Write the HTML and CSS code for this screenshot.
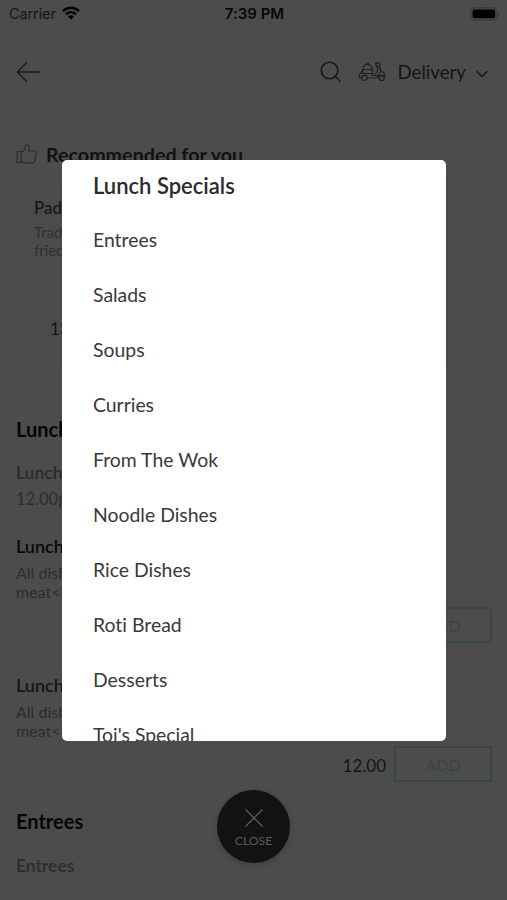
FILE: index.html
```html
<!DOCTYPE html>
<html lang="en">
<head>
<meta charset="utf-8">
<title>Menu</title>
<link rel="stylesheet" href="styles.css">
</head>
<body>
<div class="screen">
  <header class="status">
    <div class="carrier">Carrier
      <svg width="18" height="14" viewBox="0 0 18 14"><g fill="none" stroke="#030303" stroke-width="2.5"><path d="M1 5.1C5.5.7 12.500.7 17 5.100"/><path d="M4 8.300C6.900 5.500 11.100 5.500 14 8.300"/></g><path d="M6 10.600Q9 8 12 10.600L9 13.700Z" fill="#030303"/></svg>
    </div>
    <div class="time">7:39 PM</div>
    <svg class="battery" width="30" height="14" viewBox="0 0 30 14"><rect x=".7" y=".8" width="26.300" height="12.300" rx="3.500" fill="none" stroke="#343434"/><rect x="2.500" y="2.600" width="22.700" height="8.700" rx="1.800" fill="#000"/><path d="M28.400 5Q30.400 7 28.400 9Z" fill="#343434"/></svg>
  </header>
  <nav class="nav">
    <svg width="25" height="22" viewBox="0 0 25 22" fill="none" stroke="#1c1c1c" stroke-width="1.500"><path d="M24 11H1.500M11 1L1.500 11L11 21"/></svg>
    <div class="nav-right">
      <svg class="search" width="22" height="22" viewBox="0 0 22 22" fill="none" stroke="#181818" stroke-width="1.500"><circle cx="9.500" cy="9.500" r="8.300"/><path d="M15.500 15.500L20.500 20.800"/></svg>
      <svg class="scooter" width="28" height="20" viewBox="0 0 28 20" fill="none" stroke="#202020" stroke-width="1.200" stroke-linejoin="round"><path d="M5 7.500Q5 2.500 9.500 2.500T14 7.500M7.500 2.500Q9.500 0 11.500 2.500M4.500 7.500H14.500V11.500H5ZM4.500 9Q1 11.500 1 15.500H3.700M9.500 16H18.500M14.500 11.500Q14 14 16.500 13.500"/><circle cx="6.500" cy="15.800" r="2.700"/><path d="M17.500 1.200H21.800V4.500H18.500ZM19 4.500L20 8L16.500 13.500H20L23 9.500L21.500 4.500M22.800 9Q27 10.500 27 14.500L21.500 13.500L18.500 16"/><circle cx="23.700" cy="16" r="2.600"/></svg>
      <span class="mode">Delivery</span>
      <svg class="chev" width="14" height="8" viewBox="0 0 14 8" fill="none" stroke="#181818" stroke-width="1.500"><path d="M1.500 1.300L7 6.500L12.500 1.300"/></svg>
    </div>
  </nav>
  <main class="content">
    <div class="recommended">
      <svg width="22" height="20" viewBox="0 0 22 20" fill="none" stroke="#2b2b2b" stroke-width="1.200" stroke-linejoin="round"><path d="M1 7.500H5.200V18.500H1ZM5.200 8.500Q9 6.500 9.500 2Q9.700.7 11 .8Q13.700 1 13.200 4.200L12.600 7H18.500Q20.400 7.200 20.200 9L18.700 16.800Q18.200 18.800 16.200 18.800H9Q7 18.800 5.200 17.500"/></svg>
      <h2>Recommended for you</h2>
    </div>
    <section class="card">
      <h3>Pad</h3>
      <p>Tradi<br>fried</p>
      <div class="card-price">13.00</div>
    </section>
    <h2 class="section-title">Lunch</h2>
    <h3 class="category">Lunch</h3>
    <p class="hours">12.00p</p>
    <article class="dish">
      <h3>Lunch</h3>
      <p>All dish<br>meat&lt;b</p>
      <div class="buy"><div class="add">ADD</div></div>
    </article>
    <article class="dish">
      <h3>Lunch</h3>
      <p>All dish<br>meat&lt;b</p>
      <div class="buy"><span>12.00</span><div class="add">ADD</div></div>
    </article>
    <h2 class="entrees-title">Entrees</h2>
    <h3 class="entrees-category">Entrees</h3>
  </main>
  <div class="modal">
    <ul>
      <li class="selected">Lunch Specials</li>
      <li>Entrees</li>
      <li>Salads</li>
      <li>Soups</li>
      <li>Curries</li>
      <li>From The Wok</li>
      <li>Noodle Dishes</li>
      <li>Rice Dishes</li>
      <li>Roti Bread</li>
      <li>Desserts</li>
      <li>Toi's Special</li>
    </ul>
  </div>
  <div class="close">
    <svg width="18" height="18" viewBox="0 0 18 18" stroke="#5a5a5a" stroke-width="1.300"><path d="M.5.5L17.500 17.500M17.500.5L.5 17.500"/></svg>
    <span>CLOSE</span>
  </div>
</div>
</body>
</html>
```
FILE: styles.css
```css
* { box-sizing: border-box; }
body { margin: 0; background: #4c4c4c; }
h2, h3, p, ul { margin: 0; padding: 0; font-weight: inherit; }
svg { display: block; flex: none; }
.screen {
  position: relative;
  width: 507px;
  height: 900px;
  overflow: hidden;
  background: #4c4c4c;
  font-family: Lato, sans-serif;
  font-variant-ligatures: none;
  color: #111;
}
.status {
  height: 28px;
  display: grid;
  grid-template-columns: 1fr auto 1fr;
  align-items: center;
  padding: 0 7px 0 9px;
  font-family: Inter, sans-serif;
  font-size: 14.5px;
  line-height: 28px;
}
.carrier { display: flex; align-items: center; gap: 6px; margin-right: -2px; letter-spacing: -0.1px; color: #151515; }
.carrier svg { margin-top: -2px; }
.time { font-size: 15px; font-weight: 600; color: #080808; }
.battery { justify-self: end; margin-top: -1px; }
.nav {
  height: 88px;
  display: flex;
  justify-content: space-between;
  align-items: center;
  padding: 0 18px 0 16px;
}
.nav-right { display: flex; align-items: center; }
.search { margin-right: -1px; }
.scooter { margin-left: 17px; }
.mode { margin-left: 11px; font-size: 18.7px; line-height: 24px; color: #151515; }
.chev { margin-left: 9px; margin-top: 3px; }
.content { padding: 0 15px 0 16px; white-space: nowrap; }
.recommended {
  height: 62px;
  padding-top: 25px;
  display: flex;
  gap: 8px;
}
.recommended svg { margin-top: 3px; }
.recommended h2 { font-size: 19.7px; line-height: 27px; font-weight: 700; color: #111; }
.card { height: 190px; padding: 18px; background: #4b4b4b; }
.card h3 { font-size: 17px; line-height: 24px; font-weight: 500; color: #151515; }
.card p { margin-top: 3px; font-size: 15px; line-height: 18px; color: #303030; }
.card-price { margin: 58px 0 0 16px; font-size: 17px; line-height: 24px; color: #151515; }
.section-title, .entrees-title {
  font-size: 20px;
  line-height: 26px;
  font-weight: 700;
  color: #050505;
}
.section-title { margin-top: 48px; }
.category, .entrees-category {
  font-size: 17.5px;
  line-height: 24px;
  font-weight: 600;
  color: #2b2b2b;
}
.category { margin-top: 19px; }
.hours { margin-top: 3px; font-size: 16.5px; line-height: 22px; color: #2d2d2d; }
.dish { height: 139px; }
.hours + .dish { margin-top: 24px; }
.dish h3 { font-size: 18px; line-height: 24px; font-weight: 600; color: #090909; }
.dish + .dish h3 { color: #151515; }
.dish p { margin-top: 5px; font-size: 16px; line-height: 19px; color: #2d2d2d; }
.buy { display: flex; justify-content: flex-end; align-items: center; gap: 8px; margin-top: 6px; }
.buy span { font-size: 17px; color: #151515; padding-top: 2px; }
.add {
  width: 98px;
  height: 36px;
  border: 2px solid #374741;
  font-size: 16px;
  font-weight: 600;
  line-height: 33px;
  text-align: center;
  color: #3e4441;
}
.entrees-title { margin-top: -4px; }
.entrees-category { margin-top: 20px; }
.modal {
  position: absolute;
  left: 62px;
  top: 160px;
  width: 384px;
  height: 581px;
  overflow: hidden;
  border-radius: 5px;
  background: #fff;
}
.modal ul { list-style: none; padding-left: 31px; margin-top: -3px; }
.modal li { height: 55px; line-height: 55px; font-size: 19.4px; color: #393939; }
.modal .selected { line-height: 58px; font-size: 22px; font-weight: 600; color: #2b2b2b; }
.close {
  position: absolute;
  left: 217px;
  top: 790px;
  width: 73px;
  height: 73px;
  padding-top: 19px;
  display: flex;
  flex-direction: column;
  align-items: center;
  border-radius: 50%;
  background: #121212;
  box-shadow: 0 2px 6px #0003;
  color: #5a5a5a;
}
.close span { margin-top: 6px; font-size: 12.2px; line-height: 16px; }
```
